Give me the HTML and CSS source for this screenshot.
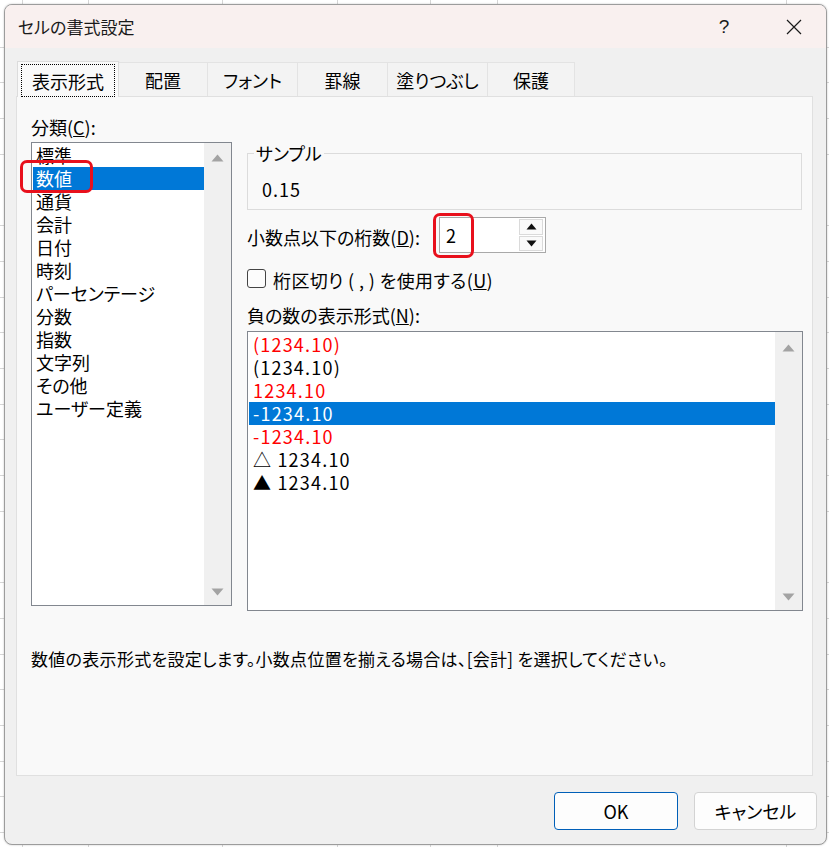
FILE: index.html
```html
<!DOCTYPE html>
<html lang="ja">
<head>
<meta charset="utf-8">
<title>セルの書式設定</title>
<link rel="stylesheet" href="styles.css">
</head>
<body>
<div class="dialog">
  <div class="titlebar">
    <span class="title">セルの書式設定</span>
    <span class="help">?</span>
    <span class="close"><svg width="16" height="16" viewBox="0 0 16 16"><path d="M1 1L15 15M15 1L1 15" stroke="#1a1a1a" stroke-width="1.2" fill="none"/></svg></span>
  </div>
  <div class="body">
    <div class="tabs">
      <div class="tab active w1"><span class="focus">表示形式</span></div>
      <div class="tab w2">配置</div>
      <div class="tab w3">フォント</div>
      <div class="tab w4">罫線</div>
      <div class="tab w5">塗りつぶし</div>
      <div class="tab w6">保護</div>
    </div>
    <div class="panel">
      <div class="columns">
        <div class="left">
          <div class="label">分類(<u>C</u>):</div>
          <div class="listbox cat">
            <div class="items">
              <div class="item">標準</div>
              <div class="item sel">数値</div>
              <div class="item">通貨</div>
              <div class="item">会計</div>
              <div class="item">日付</div>
              <div class="item">時刻</div>
              <div class="item">パーセンテージ</div>
              <div class="item">分数</div>
              <div class="item">指数</div>
              <div class="item">文字列</div>
              <div class="item">その他</div>
              <div class="item">ユーザー定義</div>
            </div>
            <div class="scroll">
              <svg class="arr" width="13" height="8" viewBox="0 0 13 8"><path d="M6.5 0.5L12.5 7.5H0.5Z" fill="#a3a3a3"/></svg>
              <svg class="arr" width="13" height="8" viewBox="0 0 13 8"><path d="M6.5 7.5L12.5 0.5H0.5Z" fill="#a3a3a3"/></svg>
            </div>
            <div class="mark mark-cat"></div>
          </div>
        </div>
        <div class="right">
          <fieldset class="sample">
            <legend>サンプル</legend>
            <div class="sample-val">0.15</div>
          </fieldset>
          <div class="spin-row">
            <span class="spin-label">小数点以下の桁数(<u>D</u>):</span>
            <div class="spin">
              <span class="spin-val">2</span>
              <div class="spin-btns">
                <div class="sbtn"><svg width="11" height="7" viewBox="0 0 11 7"><path d="M5.5 0.5L10.5 6.5H0.5Z" fill="#111"/></svg></div>
                <div class="sbtn"><svg width="11" height="7" viewBox="0 0 11 7"><path d="M5.5 6.5L10.5 0.5H0.5Z" fill="#111"/></svg></div>
              </div>
              <div class="mark mark-spin"></div>
            </div>
          </div>
          <div class="check-row">
            <span class="checkbox"></span>
            <span class="check-text">桁区切り ( , ) を使用する(<u>U</u>)</span>
          </div>
          <div class="label neg-label">負の数の表示形式(<u>N</u>):</div>
          <div class="listbox neg">
            <div class="items">
              <div class="item num red">(1234.10)</div>
              <div class="item num">(1234.10)</div>
              <div class="item num red">1234.10</div>
              <div class="item num sel">-1234.10</div>
              <div class="item num red">-1234.10</div>
              <div class="item num">△ 1234.10</div>
              <div class="item num">▲ 1234.10</div>
            </div>
            <div class="scroll">
              <svg class="arr" width="13" height="8" viewBox="0 0 13 8"><path d="M6.5 0.5L12.5 7.5H0.5Z" fill="#a3a3a3"/></svg>
              <svg class="arr" width="13" height="8" viewBox="0 0 13 8"><path d="M6.5 7.5L12.5 0.5H0.5Z" fill="#a3a3a3"/></svg>
            </div>
          </div>
        </div>
      </div>
      <div class="desc">数値の表示形式を設定します。小数点位置を揃える場合は、[会計] を選択してください。</div>
    </div>
    <div class="footer">
      <button class="btn ok">OK</button>
      <button class="btn">キャンセル</button>
    </div>
  </div>
</div>
</body>
</html>
```

FILE: styles.css
```css
html, body {
  margin: 0;
  padding: 0;
}
body {
  width: 829px;
  height: 847px;
  overflow: hidden;
  background-color: #ffffff;
  background-image:
    linear-gradient(#d6d6d6, #d6d6d6),
    linear-gradient(#d6d6d6, #d6d6d6),
    linear-gradient(#d6d6d6, #d6d6d6),
    linear-gradient(#d6d6d6, #d6d6d6),
    linear-gradient(#d6d6d6, #d6d6d6),
    linear-gradient(#d6d6d6, #d6d6d6),
    linear-gradient(#d6d6d6, #d6d6d6),
    repeating-linear-gradient(to bottom, transparent 0, transparent 34.7px, #d6d6d6 34.7px, #d6d6d6 35.7px);
  background-size: 1px 100%, 1px 100%, 1px 100%, 1px 100%, 1px 100%, 1px 100%, 1px 100%, 100% 100%;
  background-position: 22px 0, 88px 0, 222px 0, 337px 0, 430px 0, 497px 0, 786px 0, 0 12px;
  background-repeat: no-repeat;
  font-family: "Noto Sans CJK JP", "Noto Sans", sans-serif;
  font-feature-settings: "palt";
  font-size: 18px;
  color: #000;
}
.dialog {
  box-sizing: border-box;
  margin: 4px 0 0 4px;
  width: 823px;
  height: 841px;
  border: 1px solid #9c9c9c;
  border-radius: 8px;
  overflow: hidden;
  background: #f0f0f0;
  display: flex;
  flex-direction: column;
  box-shadow: 0 0 2px rgba(0,0,0,0.25);
}
.titlebar {
  height: 43px;
  flex: none;
  background: #f9f0ef;
  display: flex;
  align-items: center;
  padding-left: 13px;
}
.title {
  flex: 1;
  font-size: 17px;
  color: #1a1a1a;
}
.help {
  width: 46px;
  text-align: center;
  font-size: 19px;
  font-family: "Liberation Sans", sans-serif;
  color: #1a1a1a;
}
.close {
  width: 46px;
  margin-left: 24px;
  margin-right: 9px;
  display: flex;
  justify-content: center;
}
.body {
  flex: 1;
  display: flex;
  flex-direction: column;
  padding: 13px 9px 0 11px;
}
.tabs {
  display: flex;
  align-items: flex-end;
  height: 35px;
  padding-left: 1px;
  margin-right: 4px;
  position: relative;
  z-index: 1;
}
.tab {
  box-sizing: border-box;
  height: 34px;
  border: 1px solid #e3e3e3;
  border-bottom: none;
  border-left: none;
  background: #f3f3f3;
  display: flex;
  align-items: center;
  justify-content: center;
  line-height: 24px;
}
.tab.active {
  height: 36px;
  margin-bottom: -1px;
  background: #f9f9f9;
  border-left: 1px solid #e3e3e3;
  border-color: #dcdcdc;
  padding: 2px 3px 0 3px;
  align-items: stretch;
}
.focus {
  flex: 1;
  border: 1px dotted #000;
  display: flex;
  align-items: center;
  justify-content: center;
}
.w1 { width: 102px; }
.w2 { width: 89px; }
.w3 { width: 90px; }
.w4 { width: 90px; }
.w5 { width: 100px; }
.w6 { width: 87px; }
.panel {
  box-sizing: border-box;
  height: 680px;
  margin-right: 4px;
  border: 1px solid #e0e0e0;
  background: #f9f9f9;
  padding: 18px 0 0 14px;
  flex: none;
}
.columns {
  display: flex;
}
.left {
  width: 201px;
  display: flex;
  flex-direction: column;
}
.label {
  line-height: 24px;
  height: 24px;
  margin-bottom: 3px;
}
.listbox {
  box-sizing: border-box;
  border: 1px solid #82878f;
  background: #fff;
  display: flex;
  position: relative;
}
.listbox.cat {
  height: 464px;
}
.items {
  flex: 1;
  padding: 1px 0 0 1px;
}
.item {
  height: 23px;
  line-height: 23px;
  padding-left: 3px;
  white-space: nowrap;
}
.item.sel {
  background: #0078d7;
  color: #fff;
}
.item.red { color: #ff0000; }
.item.num {
  letter-spacing: 1.2px;
  padding-left: 4px;
}
.scroll {
  width: 27px;
  background: #f0f0f0;
  display: flex;
  flex-direction: column;
  justify-content: space-between;
  align-items: center;
  padding: 11px 0 9px 0;
  box-sizing: border-box;
}
.neg .scroll {
  padding: 12px 0 9px 0;
}
.arr { display: block; }
.mark {
  position: absolute;
  box-sizing: border-box;
  border: 3px solid #e8101c;
  border-radius: 7px;
  pointer-events: none;
}
.mark-cat {
  left: -12px;
  top: 17px;
  width: 73px;
  height: 33px;
}
.right {
  margin-left: 15px;
  width: 556px;
  display: flex;
  flex-direction: column;
}
.sample {
  margin: 28px 1px 0 0;
  padding: 0 0 8px 6px;
  border: 1px solid #dcdcdc;
  min-width: 0;
}
.sample legend {
  padding: 0 2px;
  line-height: 20px;
  height: 20px;
}
.sample-val {
  margin: 14px 0 0 8px;
  line-height: 24px;
  letter-spacing: 1px;
}
.spin-row {
  margin-top: 7px;
  height: 36px;
  display: flex;
  align-items: center;
}
.spin-label {
  width: 192px;
  line-height: 24px;
  padding-top: 3px;
}
.spin {
  box-sizing: border-box;
  width: 107px;
  height: 36px;
  border: 1px solid #a9a9a9;
  background: #fff;
  display: flex;
  align-items: center;
  position: relative;
  padding: 1px 2px 1px 6px;
}
.spin-val {
  flex: 1;
  line-height: 24px;
}
.spin-btns {
  width: 24px;
  align-self: stretch;
  display: flex;
  flex-direction: column;
  gap: 1px;
}
.sbtn {
  flex: 1;
  box-sizing: border-box;
  border: 1px solid #dadada;
  background: #fafafa;
  display: flex;
  align-items: center;
  justify-content: center;
}
.mark-spin {
  left: -7px;
  top: -5px;
  width: 41px;
  height: 45px;
}
.check-row {
  margin-top: 15px;
  height: 20px;
  display: flex;
  align-items: center;
  gap: 7px;
  line-height: 24px;
}
.checkbox {
  box-sizing: border-box;
  width: 19px;
  height: 19px;
  border: 1px solid #444;
  border-radius: 3px;
  background: #fcfcfc;
  flex: none;
}
.check-text {
  padding-top: 3px;
  letter-spacing: 0.4px;
}
.neg-label {
  margin-top: 15px;
  margin-bottom: 4px;
}
.listbox.neg {
  height: 280px;
}
.desc {
  margin-top: 36px;
  line-height: 24px;
  font-size: 17px;
  letter-spacing: 0.3px;
}
.footer {
  display: flex;
  justify-content: flex-end;
  gap: 16px;
  margin-top: 16px;
}
.btn {
  box-sizing: border-box;
  width: 123px;
  height: 38px;
  border: 1px solid #d3d3d3;
  border-radius: 4px;
  background: #fdfdfd;
  font-family: "Noto Sans CJK JP", sans-serif;
  font-feature-settings: "palt";
  font-size: 18px;
  color: #000;
  padding: 0;
}
.btn.ok {
  width: 124px;
  border-color: #005fb8;
}
```
